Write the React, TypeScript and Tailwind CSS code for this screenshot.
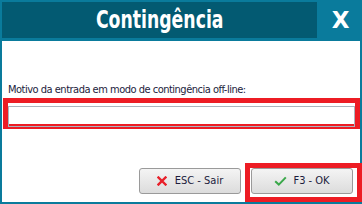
import React from 'react';

const XIcon: React.FC = () => (
  <svg width="10" height="10" viewBox="0 0 10 10" className="shrink-0">
    <path d="M1.5 1.5 L8.5 8.5 M8.5 1.5 L1.5 8.5" stroke="#e8202a" strokeWidth="2.4" strokeLinecap="square" />
  </svg>
);

const CheckIcon: React.FC = () => (
  <svg width="13" height="10" viewBox="0 0 13 10" className="shrink-0">
    <path d="M1.2 5.2 L4.8 8.6 L11.8 1.4" stroke="#3aa84a" strokeWidth="2" fill="none" />
  </svg>
);

const App: React.FC = () => {
  return (
    <div className="w-[362px] h-[204px] bg-[#0a7b9c] flex flex-col pt-[2px] px-[2px] pb-[2px] font-['DejaVu_Sans_Condensed','Liberation_Sans',sans-serif]">
      {/* header */}
      <div className="flex h-[39px] shrink-0">
        <div className="w-[315px] h-[36px] bg-[#035a72] flex items-center justify-center">
          <span className="text-white font-bold text-[24px] leading-none font-['DejaVu_Sans_Condensed',sans-serif] scale-x-[0.8] pb-[1px]">
            Contingência
          </span>
        </div>
        <div className="flex-1 h-[36px] flex items-center justify-center pl-[4px]">
          <span className="text-white font-bold text-[23px] leading-none font-['DejaVu_Sans',sans-serif]">X</span>
        </div>
      </div>

      {/* body */}
      <div className="flex-1 bg-white flex flex-col">
        <p className="mt-[42px] ml-[6px] text-[11px] leading-[13px] tracking-[-0.5px] text-[#1c1c3c]">
          Motivo da entrada em modo de contingência off-line:
        </p>
        <div className="mt-[2px] ml-[1px] border-[5px] border-[#ed1c24] h-[31px]">
          <input className="w-full h-full border border-[#abb3bd] outline-none px-1 text-[11px]" />
        </div>

        <div className="mt-auto flex justify-end items-start">
          <button className="mt-[5px] w-[102px] h-[26px] rounded-[3px] border border-[#9a9a9a] bg-gradient-to-b from-[#f4f4f4] to-[#dcdcdc] flex items-center justify-center gap-[8px] text-[11px] text-[#1c1c3c]">
            <XIcon />
            <span>ESC - Sair</span>
          </button>
          <div className="ml-[4px] -mr-[2px] border-[5px] border-[#ed1c24] pl-[1px] pr-[4px] pb-[3px]">
            <button className="w-[102px] h-[26px] rounded-[3px] border border-[#9a9a9a] bg-gradient-to-b from-[#f4f4f4] to-[#dcdcdc] flex items-center justify-center gap-[6px] text-[11px] text-[#1c1c3c]">
              <CheckIcon />
              <span>F3 - OK</span>
            </button>
          </div>
        </div>
      </div>
    </div>
  );
};

export default App;
